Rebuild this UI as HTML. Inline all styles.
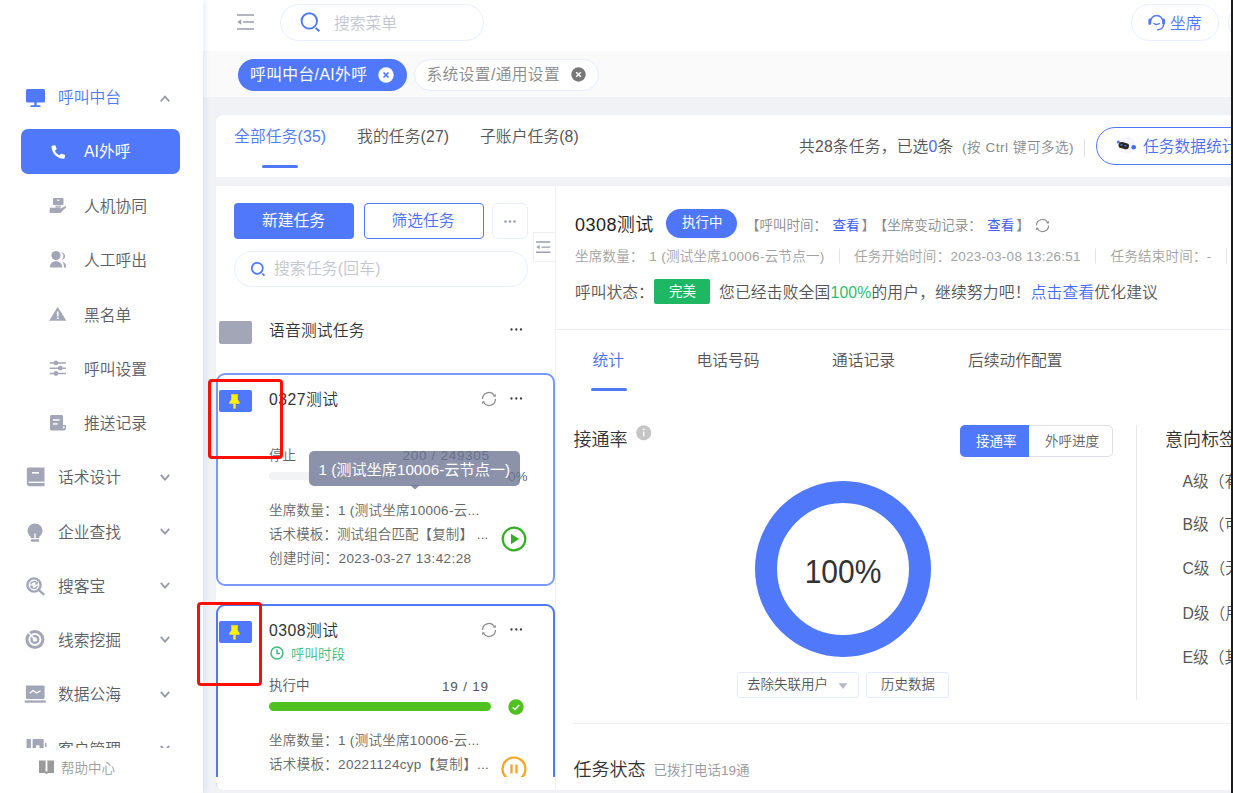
<!DOCTYPE html>
<html lang="zh-CN">
<head>
<meta charset="utf-8">
<title>AI外呼</title>
<style>
*{box-sizing:border-box;margin:0;padding:0}
html,body{width:1233px;height:793px;overflow:hidden;background:#f0f2f5}
body{position:relative;font-family:"Liberation Sans","Noto Sans CJK SC",sans-serif;font-size:15.75px;color:#333;font-weight:350;-webkit-font-smoothing:antialiased}
.abs{position:absolute}
.t{position:absolute;white-space:nowrap;line-height:1;transform:translateY(-50%)}
svg{position:absolute;overflow:visible}
/* sidebar */
#side{position:absolute;left:0;top:0;width:203px;height:793px;background:#fff;box-shadow:2px 0 5px rgba(80,120,250,.14);z-index:5}
#side .t{font-size:15.75px;color:#5c5e66;transform:translateY(-50%)}
#side .sub{left:84px}
#side .top{left:58px}
.chev{position:absolute;left:160px;width:10px;height:7px}
#foot{position:absolute;left:0;top:748px;width:203px;height:45px;background:#fff}
/* header */
#head{position:absolute;left:203px;top:0;width:1030px;height:51px;background:#fff}
#tabs{position:absolute;left:203px;top:51px;width:1030px;height:46px;background:#fafafa}
.pill{position:absolute;border-radius:20px}
/* panels */
#p1{position:absolute;left:216px;top:115px;width:1030px;height:62px;background:#fff;border-radius:8px 0 0 0}
#p2{position:absolute;left:216px;top:186px;width:1030px;height:604px;background:#fff;border-radius:0 0 0 8px;overflow:hidden}
#rightbar{position:absolute;left:1231px;top:0;width:2px;height:793px;background:#1c1c1c;z-index:20}
.red{position:absolute;border:3px solid #ff0e00;border-radius:4px;z-index:30}
</style>
</head>
<body>

<!-- ============ SIDEBAR ============ -->
<div id="side">
  <!-- 呼叫中台 -->
  <svg style="left:26px;top:88.600px" width="19" height="19" viewBox="0 0 19 19"><rect x="0" y="0" width="19" height="13.5" rx="1.5" fill="#5078fa"/><rect x="8.3" y="13" width="2.4" height="4" fill="#5078fa"/><rect x="4.5" y="16.3" width="10" height="1.8" rx=".6" fill="#5078fa"/></svg>
  <div class="t top" style="top:98.2px;color:#5078fa">呼叫中台</div>
  <svg class="chev" style="top:95px" viewBox="0 0 10 7"><path d="M.8 6.300 L5 1.500 L9.200 6.300" fill="none" stroke="#9699a7" stroke-width="1.800"/></svg>

  <div class="abs" style="left:21px;top:129px;width:159px;height:45px;background:#5078fa;border-radius:7px"></div>
  <svg style="left:50px;top:144.500px" width="16.500" height="15.500" viewBox="0 0 16 15"><path d="M2.2.6 4.6.2c.4 0 .7.2.8.5l1 2.9c.1.3 0 .6-.2.8L4.8 5.600c.9 2 2.400 3.500 4.400 4.400l1.200-1.400c.2-.2.500-.3.800-.2l2.900 1c.300.100.500.400.500.800l-.4 2.400c-.1.400-.4.600-.8.600C6.800 13.200 1.600 8 1.500 1.400c0-.4.300-.7.700-.8z" fill="#fff"/></svg>
  <div class="t sub" style="top:152.2px;color:#fff;font-weight:400">AI外呼</div>

  <div class="t sub" style="top:207.1px">人机协同</div>
  <div class="t sub" style="top:261.3px">人工呼出</div>
  <div class="t sub" style="top:315.6px">黑名单</div>
  <div class="t sub" style="top:369.8px">呼叫设置</div>
  <div class="t sub" style="top:424.0px">推送记录</div>

  <div class="t top" style="top:478.3px">话术设计</div>
  <div class="t top" style="top:532.6px">企业查找</div>
  <div class="t top" style="top:586.8px">搜客宝</div>
  <div class="t top" style="top:641.1px">线索挖掘</div>
  <div class="t top" style="top:695.3px">数据公海</div>
  <div class="t top" style="top:749.6px">客户管理</div>

  <svg class="chev" style="top:474px" viewBox="0 0 10 7"><path d="M.8 .8 L5 5.600 L9.200 .8" fill="none" stroke="#9699a7" stroke-width="1.800"/></svg>
  <svg class="chev" style="top:528px" viewBox="0 0 10 7"><path d="M.8 .8 L5 5.600 L9.200 .8" fill="none" stroke="#9699a7" stroke-width="1.800"/></svg>
  <svg class="chev" style="top:582px" viewBox="0 0 10 7"><path d="M.8 .8 L5 5.600 L9.200 .8" fill="none" stroke="#9699a7" stroke-width="1.800"/></svg>
  <svg class="chev" style="top:636px" viewBox="0 0 10 7"><path d="M.8 .8 L5 5.600 L9.200 .8" fill="none" stroke="#9699a7" stroke-width="1.800"/></svg>
  <svg class="chev" style="top:691px" viewBox="0 0 10 7"><path d="M.8 .8 L5 5.600 L9.200 .8" fill="none" stroke="#9699a7" stroke-width="1.800"/></svg>
  <svg class="chev" style="top:745px" viewBox="0 0 10 7"><path d="M.8 .8 L5 5.600 L9.200 .8" fill="none" stroke="#9699a7" stroke-width="1.800"/></svg>


  <!-- sub icons -->
  <svg style="left:49px;top:197px" width="18" height="17" viewBox="0 0 18 17"><g fill="#a3a6b6"><rect x="4" y="1" width="10.500" height="7" rx="1"/><rect x="6.500" y="8.500" width="5.500" height="2.300" fill="#b9bbc7"/><path d="M.7 10.800h8.800l2.300.7 4.600-2.400.9 1.100-6 5.700H.7z"/></g><rect x="8" y="2.700" width="2.500" height="1" fill="#fff"/></svg>
  <svg style="left:49px;top:250px" width="18" height="18" viewBox="0 0 18 18"><g fill="#a3a6b6"><circle cx="7" cy="5.600" r="4.600"/><path d="M.8 17.500c0-4 2.600-6.300 6.200-6.300s6.200 2.300 6.200 6.300z"/><path d="M12.300 2.300c2.600.5 3.800 2.500 3.800 4 0 1.600-1.100 3.200-3.400 3.500 1.400-1.200 1.700-2.600 1.700-3.800 0-1.300-.8-2.800-2.100-3.700zM13.600 11.800c2.300.8 3.600 2.800 3.600 5.700h-2.300c0-2.200-.3-4.200-1.300-5.700z"/></g></svg>
  <svg style="left:49px;top:306px" width="18" height="16" viewBox="0 0 18 16"><path d="M8.700.7 17.300 14.800H.2z" fill="#a3a6b6"/><rect x="7.900" y="5.400" width="1.700" height="5" fill="#fff"/><rect x="7.900" y="11.400" width="1.700" height="1.700" fill="#fff"/></svg>
  <svg style="left:49px;top:359px" width="18" height="18" viewBox="0 0 18 18"><g stroke="#a3a6b6" stroke-width="1.500"><path d="M.7 3.900h16.200M.7 9.200h16.200M.7 14.500h16.200"/></g><g fill="#a3a6b6"><circle cx="6.900" cy="3.900" r="2.400"/><circle cx="11.300" cy="9.200" r="2.400"/><circle cx="6.900" cy="14.500" r="2.400"/></g></svg>
  <svg style="left:50px;top:415px" width="17" height="16" viewBox="0 0 17 16"><path d="M1.500 0h10c.8 0 1.500.7 1.500 1.500V10h3v3.500c0 1.100-.9 2-2 2H1.500C.7 15.500 0 14.800 0 14V1.500C0 .7.700 0 1.500 0z" fill="#a3a6b6"/><rect x="3" y="4.200" width="6.500" height="1.500" fill="#fff"/><rect x="3" y="8.200" width="4.600" height="1.500" fill="#fff"/><rect x="13" y="11.300" width="1.600" height="2" fill="#fff"/></svg>
  <!-- top icons -->
  <svg style="left:26px;top:467px" width="19" height="20" viewBox="0 0 19 20"><path d="M2.500.6h16v18.600H3.500c-1.400 0-2.700-1.100-2.700-2.600V2.300C.8 1.400 1.600.6 2.500.6z" fill="#a3a6b6"/><rect x="6" y="5" width="7" height="1.600" fill="#fff"/><path d="M2.500 15.300h16" stroke="#fff" stroke-width="1.300"/></svg>
  <svg style="left:26px;top:522.500px" width="19" height="20" viewBox="0 0 19 20"><path d="M9 .5c4.100 0 7.500 3.200 7.500 7.300 0 2.500-1.400 4.500-3.100 5.800v1.300H4.600v-1.300C2.900 12.300 1.500 10.300 1.500 7.800 1.500 3.700 4.900.5 9 .5z" fill="#a3a6b6"/><rect x="4.800" y="16.200" width="8.400" height="2.500" rx=".8" fill="#a3a6b6"/><rect x="8.300" y="10.500" width="1.400" height="4.400" fill="#fff"/></svg>
  <svg style="left:25px;top:576px" width="21" height="20" viewBox="0 0 21 20"><circle cx="9" cy="9" r="6.600" fill="none" stroke="#a3a6b6" stroke-width="2.400"/><path d="M14 14.200l5.300 4.700" stroke="#a3a6b6" stroke-width="2.300"/><path d="M5.700 8.300A3.400 3.400 0 0 1 11.600 6.800M12.300 9.700A3.400 3.400 0 0 1 6.400 11.200" fill="none" stroke="#a3a6b6" stroke-width="1.500"/><path d="M12.700 5.200v3.300H9.400zM5.300 12.800V9.500h3.300z" fill="#a3a6b6"/></svg>
  <svg style="left:25px;top:628.500px" width="20" height="21" viewBox="0 0 20 21"><circle cx="9.900" cy="10.500" r="8" fill="none" stroke="#a3a6b6" stroke-width="3"/><circle cx="9.900" cy="10.500" r="3.400" fill="none" stroke="#a3a6b6" stroke-width="2.300"/><path d="M2.600 2.600l7.300 7.900" stroke="#fff" stroke-width="1.500"/></svg>
  <svg style="left:24px;top:685px" width="22" height="19" viewBox="0 0 22 19"><rect x="1.900" y=".5" width="18.700" height="13.400" rx=".8" fill="#a3a6b6"/><rect x=".7" y="15.400" width="21.100" height="2.300" fill="#a3a6b6"/><path d="M5.800 8.300l3.200-2.800 3.600 2.600 4-2.300" fill="none" stroke="#fff" stroke-width="1.300"/></svg>
  <svg style="left:26px;top:739px" width="21" height="18" viewBox="0 0 21 18"><rect x=".5" y="0" width="4.400" height="17" fill="#a3a6b6"/><rect x="6.600" y="0" width="11.100" height="17" rx="1" fill="#a3a6b6"/><circle cx="11.800" cy="7.800" r="1.900" fill="#fff"/><rect x="19" y="4" width="1.500" height="4" fill="#a3a6b6"/></svg>
  <div id="foot">
    <svg style="left:39px;top:12px" width="15" height="15" viewBox="0 0 15 15"><path d="M0 .5h6.600v12.500H0zM8.400.5H15v12.500H8.400zM6.600 11.500h1.800v3l-.9-.8-.9.800z" fill="#9a9a9a"/></svg>
    <div class="t" style="left:61px;top:21px;font-size:13.5px;color:#9b9b9b">帮助中心</div>
  </div>
</div>

<!-- ============ HEADER ============ -->
<div id="head">
  <svg style="left:34px;top:14px" width="18" height="16" viewBox="0 0 18 16"><path d="M0 1h17M6 8h11M0 15h17" stroke="#9a9eae" stroke-width="1.700" fill="none"/><path d="M4.200 5.200v5.600L.4 8z" fill="#9a9eae"/></svg>
  <div class="pill" style="left:77px;top:4px;width:204px;height:37px;border:1px solid #e9edff;background:#fff"></div>
  <svg style="left:98px;top:12px" width="20" height="20" viewBox="0 0 20 20"><circle cx="8.300" cy="8.900" r="7.700" fill="none" stroke="#5078fa" stroke-width="1.900"/><path d="M14.600 15.900l3.800 3.300" stroke="#5078fa" stroke-width="2" fill="none"/></svg>
  <div class="t" style="left:131px;top:23.5px;color:#c3c6cf">搜索菜单</div>
  <div class="pill" style="left:927.5px;top:4px;width:88px;height:37px;border:1px solid #e9edff;background:#fff"></div>
  <svg style="left:944.500px;top:13px" width="18" height="18" viewBox="0 0 18 18"><path d="M2.600 8.600a6.100 6.100 0 1 1 12.200 0" fill="none" stroke="#5078fa" stroke-width="1.500"/><rect x=".4" y="5.600" width="2.800" height="6.400" rx="1.400" fill="#5078fa"/><rect x="14.200" y="5.600" width="2.800" height="6.400" rx="1.400" fill="#5078fa"/><path d="M5.400 10.200c1.900 1.500 4.500 1.500 6.400 0" fill="none" stroke="#5078fa" stroke-width="1.300"/><path d="M15.600 11.500c-.3 3.200-3 5.200-6.600 5.400" fill="none" stroke="#5078fa" stroke-width="1.400"/></svg>
  <div class="t" style="left:967px;top:23.5px;font-size:15.75px;color:#5078fa">坐席</div>
  <div class="pill" style="left:1025px;top:4px;width:60px;height:37px;border:1px solid #e9edff;background:#fff"></div>
</div>
<div id="tabs">
  <div class="pill" style="left:35px;top:8px;width:169px;height:31.5px;background:#5078fa"></div>
  <div class="t" style="left:47px;top:24px;font-size:15.75px;color:#fff;font-weight:400;letter-spacing:.4px">呼叫中台/AI外呼</div>
  <svg style="left:175px;top:16px" width="16" height="16" viewBox="0 0 16 16"><circle cx="8" cy="8" r="7.700" fill="#fff"/><path d="M5.500 5.500l5 5M10.500 5.500l-5 5" stroke="#5078fa" stroke-width="1.700"/></svg>
  <div class="pill" style="left:210.500px;top:8px;width:185px;height:31.5px;background:#fff;border:1px solid #e9edff"></div>
  <div class="t" style="left:223.500px;top:24px;font-size:15.75px;color:#8a8a8a;letter-spacing:.35px">系统设置/通用设置</div>
  <svg style="left:368px;top:16px" width="15" height="15" viewBox="0 0 15 15"><circle cx="7.500" cy="7.500" r="7.200" fill="#777"/><path d="M5.200 5.200l4.600 4.600M9.800 5.200l-4.600 4.600" stroke="#fff" stroke-width="1.600"/></svg>
</div>

<div id="p1">
  <div class="t" style="left:18px;top:22px;color:#5078fa;letter-spacing:.15px">全部任务(35)</div>
  <div class="abs" style="left:46px;top:50px;width:36px;height:3px;background:#5078fa;border-radius:1.500px"></div>
  <div class="t" style="left:141px;top:22px;color:#555;letter-spacing:.15px">我的任务(27)</div>
  <div class="t" style="left:264px;top:22px;color:#555;letter-spacing:.1px">子账户任务(8)</div>
  <div class="t" style="left:583px;top:31.500px;color:#555;letter-spacing:.2px">共28条任务，已选<span style="color:#4a6cf7">0</span>条</div>
  <div class="t" style="left:746px;top:32.500px;font-size:13.5px;color:#888;letter-spacing:.55px">(按 Ctrl 键可多选)</div>
  <div class="abs" style="left:868px;top:24px;width:1px;height:18px;background:#dcdfe6"></div>
  <div class="pill" style="left:880px;top:12px;width:200px;height:38px;border:1px solid #5078fa;background:#fff"></div>
  <svg style="left:899px;top:18px" width="26" height="22" viewBox="0 0 26 22"><circle cx="12" cy="12" r="8.500" fill="#f5f5fb"/><circle cx="3.300" cy="9" r="1.600" fill="#4f78fb"/><rect x="3.500" y="9.500" width="10.600" height="6.200" rx="3" fill="#2b2b20" transform="rotate(14 8.800 12.600)"/><rect x="5.300" y="11.800" width="2.200" height="1.300" rx=".6" fill="#4f78fb" transform="rotate(14 8.800 12.600)"/><rect x="9.300" y="11.800" width="2.200" height="1.300" rx=".6" fill="#4f78fb" transform="rotate(14 8.800 12.600)"/><circle cx="18.700" cy="14.300" r="2.300" fill="#3f6af5"/></svg>
  <div class="t" style="left:927px;top:31.500px;color:#4a6cf7">任务数据统计</div>
</div>
<div id="p2">
  <!-- left list -->
  <div class="abs" style="left:18px;top:17px;width:120px;height:36px;background:#5078fa;border-radius:4px"></div>
  <div class="t" style="left:46px;top:35px;color:#fff;font-weight:400">新建任务</div>
  <div class="abs" style="left:147.500px;top:17px;width:120px;height:36px;background:#fff;border:1px solid #5078fa;border-radius:4px"></div>
  <div class="t" style="left:175.500px;top:35px;color:#4a6cf7">筛选任务</div>
  <div class="abs" style="left:276px;top:17px;width:36px;height:36px;background:#fff;border:1px solid #e9edff;border-radius:6px"></div>
  <svg style="left:288px;top:33.5px" width="12" height="3" viewBox="0 0 12 3"><g fill="#9a9eae"><circle cx="1.500" cy="1.500" r="1.300"/><circle cx="6" cy="1.500" r="1.300"/><circle cx="10.500" cy="1.500" r="1.300"/></g></svg>
  <div class="abs" style="left:317px;top:46px;width:22px;height:30px;background:#fff;border:1px solid #eff0f3;border-right:none"></div>
  <svg style="left:320px;top:55.100px" width="14.300" height="12.200" viewBox="0 0 13 11"><path d="M0 .8h13M5 5.500h8M0 10.200h13" stroke="#9a9eae" stroke-width="1.300" fill="none"/><path d="M3.300 3.500v4L.3 5.500z" fill="#9a9eae"/></svg>
  <div class="pill" style="left:18px;top:64.5px;width:294px;height:36.5px;border:1px solid #e9edff;background:#fff"></div>
  <svg style="left:35px;top:76px" width="15" height="15" viewBox="0 0 15 15"><circle cx="6.300" cy="6.300" r="5.500" fill="none" stroke="#5078fa" stroke-width="1.700"/><path d="M11.300 11.600l2.200 2.100" stroke="#5078fa" stroke-width="1.700" fill="none"/></svg>
  <div class="t" style="left:58px;top:83px;color:#c3c6cf;letter-spacing:.2px">搜索任务(回车)</div>

  <div class="abs" style="left:3px;top:135px;width:33px;height:23px;background:#a3a6b6;border-radius:2px"></div>
  <div class="t" style="left:53px;top:144.5px;color:#333;letter-spacing:.2px">语音测试任务</div>
  <svg style="left:293.700px;top:142.4px" width="13" height="3" viewBox="0 0 13 3"><g fill="#3a3a3a"><circle cx="1.500" cy="1.500" r="1.150"/><circle cx="6.300" cy="1.500" r="1.150"/><circle cx="11" cy="1.500" r="1.150"/></g></svg>

  <!-- card 1 -->
  <div class="abs" style="left:0;top:187px;width:339px;height:213px;border:2px solid #7b99fc;border-radius:9px"></div>
  <div class="abs" style="left:3px;top:204px;width:33px;height:22px;background:#5078fa;border-radius:2px"></div>
  <svg style="left:13px;top:208px" width="11" height="15" viewBox="0 0 11 15"><path d="M1.800.2h7.400l-.5 1.300v4l1.900 2.600v1.700H.4V8.100l1.900-2.600v-4z" fill="#fff100"/><rect x="4.300" y="9.600" width="2.400" height="5" fill="#fff100"/></svg>
  <div class="t" style="left:53px;top:213.500px;color:#333;letter-spacing:.5px">0327测试</div>
  <svg style="left:265px;top:205px" width="16" height="16" viewBox="0 0 16 16"><path d="M1.500 8A6.500 6.500 0 0 1 13.320 4.270M14.500 8A6.500 6.500 0 0 1 2.680 11.730" fill="none" stroke="#8c8c8c" stroke-width="1.250"/><path d="M14.600 6.100 15 2.900 11.700 5.200zM1.400 9.900 1 13.100 4.300 10.800z" fill="#8c8c8c"/></svg>
  <svg style="left:293.700px;top:211.4px" width="13" height="3" viewBox="0 0 13 3"><g fill="#3a3a3a"><circle cx="1.500" cy="1.500" r="1.150"/><circle cx="6.300" cy="1.500" r="1.150"/><circle cx="11" cy="1.500" r="1.150"/></g></svg>
  <div class="t" style="left:53px;top:270px;font-size:13.5px;color:#666">停止</div>
  <div class="t" style="left:186.500px;top:270px;font-size:13.5px;color:#5a5a5a;letter-spacing:.7px">200 / 249305</div>
  <div class="abs" style="left:53px;top:285.500px;width:222px;height:8px;background:#f2f3f5;border-radius:4px"></div>
  <div class="t" style="left:292px;top:291px;font-size:13.5px;color:#666">0%</div>
  <div class="t" style="left:53px;top:324.800px;font-size:13.5px;color:#666;letter-spacing:.3px">坐席数量：1 (测试坐席10006-云...</div>
  <div class="t" style="left:53px;top:348.500px;font-size:13.5px;color:#666;letter-spacing:.1px">话术模板：测试组合匹配【复制】 ...</div>
  <div class="t" style="left:53px;top:372.500px;font-size:13.5px;color:#666;letter-spacing:.4px">创建时间：2023-03-27 13:42:28</div>
  <svg style="left:285px;top:340px" width="26" height="26" viewBox="0 0 26 26"><circle cx="13" cy="13" r="11.300" fill="none" stroke="#35ae26" stroke-width="2.200"/><path d="M10 7.800v10.400l8-5.200z" fill="#35ae26"/></svg>
  <!-- tooltip -->
  <div class="abs" style="left:93px;top:265px;width:210.500px;height:34.500px;background:rgba(110,119,149,.8);border-radius:5px"></div>
  <svg style="left:193.500px;top:299.300px" width="10" height="5" viewBox="0 0 10 5"><path d="M0 0h10L5 4.600z" fill="rgba(110,119,149,.8)"/></svg>
  <div class="t" style="left:102.5px;top:284px;color:#fff;font-size:15.2px;font-weight:400">1 (测试坐席10006-云节点一)</div>

  <!-- card 2 -->
  <div class="abs" style="left:0;top:418px;width:339px;height:230px;border:2px solid #4f78fb;border-radius:9px"></div>
  <div class="abs" style="left:3px;top:434.500px;width:33px;height:22px;background:#5078fa;border-radius:2px"></div>
  <svg style="left:13px;top:438.500px" width="11" height="15" viewBox="0 0 11 15"><path d="M1.800.2h7.400l-.5 1.300v4l1.900 2.600v1.700H.4V8.100l1.900-2.600v-4z" fill="#fff100"/><rect x="4.300" y="9.600" width="2.400" height="5" fill="#fff100"/></svg>
  <div class="t" style="left:53px;top:444.500px;color:#333;letter-spacing:.5px">0308测试</div>
  <svg style="left:265px;top:436.300px" width="16" height="16" viewBox="0 0 16 16"><path d="M1.500 8A6.500 6.500 0 0 1 13.320 4.270M14.500 8A6.500 6.500 0 0 1 2.680 11.730" fill="none" stroke="#8c8c8c" stroke-width="1.250"/><path d="M14.600 6.100 15 2.900 11.700 5.200zM1.400 9.900 1 13.100 4.300 10.800z" fill="#8c8c8c"/></svg>
  <svg style="left:293.700px;top:442.4px" width="13" height="3" viewBox="0 0 13 3"><g fill="#3a3a3a"><circle cx="1.500" cy="1.500" r="1.150"/><circle cx="6.300" cy="1.500" r="1.150"/><circle cx="11" cy="1.500" r="1.150"/></g></svg>
  <svg style="left:54.400px;top:459.800px" width="14" height="14" viewBox="0 0 14 14"><circle cx="7" cy="7" r="6" fill="none" stroke="#3dbb7c" stroke-width="1.500"/><path d="M7 3.500V7.500h3" fill="none" stroke="#3dbb7c" stroke-width="1.500"/></svg>
  <div class="t" style="left:75px;top:468.800px;font-size:13.5px;color:#3dbb7c">呼叫时段</div>
  <div class="t" style="left:53px;top:500px;font-size:13.5px;color:#555">执行中</div>
  <div class="t" style="left:226px;top:500.500px;font-size:13.5px;color:#555;letter-spacing:.8px">19 / 19</div>
  <div class="abs" style="left:53px;top:515.500px;width:222px;height:9px;background:#4fc21f;border-radius:4.5px"></div>
  <svg style="left:292px;top:512.500px" width="16" height="16" viewBox="0 0 16 16"><circle cx="8" cy="8" r="7.700" fill="#4fc21f"/><path d="M4.700 8.200l2.300 2.300 4.200-4.500" fill="none" stroke="#fff" stroke-width="1.300"/></svg>
  <div class="t" style="left:53px;top:554.500px;font-size:13.5px;color:#666;letter-spacing:.3px">坐席数量：1 (测试坐席10006-云...</div>
  <div class="t" style="left:53px;top:579px;font-size:13.5px;color:#666;letter-spacing:.32px">话术模板：20221124cyp【复制】...</div>
  <svg style="left:284.500px;top:569.800px" width="26" height="26" viewBox="0 0 26 26"><circle cx="13" cy="13" r="11.500" fill="none" stroke="#fba324" stroke-width="2.200"/><path d="M10.500 8.500v9M15.500 8.500v9" stroke="#fba324" stroke-width="2.300"/></svg>
  <div class="abs" style="left:0;top:591px;width:341px;height:14px;background:#fff"></div>

  <!-- vertical divider -->
  <div class="abs" style="left:339px;top:0;width:1px;height:604px;background:#eff0f4"></div>

  <!-- right detail -->
  <div class="t" style="left:359px;top:38.500px;font-size:18px;color:#222;letter-spacing:.45px">0308测试</div>
  <div class="pill" style="left:450px;top:23px;width:71px;height:29px;background:#4f76f9"></div>
  <div class="t" style="left:466px;top:37px;font-size:13.5px;color:#fff;font-weight:400">执行中</div>
  <div class="t" style="left:530px;top:39.500px;font-size:13.5px;color:#8a8a8a">【呼叫时间：<b style="color:#4460f0;font-weight:400;margin:0 2px 0 5.5px">查看</b>】<span style="margin-left:5.5px">【坐席变动记录：</span><b style="color:#4460f0;font-weight:400;margin:0 2px 0 5.5px">查看</b>】</div>
  <svg style="left:819.300px;top:31.600px" width="15" height="15" viewBox="0 0 16 16"><path d="M1.500 8A6.500 6.500 0 0 1 13.320 4.270M14.500 8A6.500 6.500 0 0 1 2.680 11.730" fill="none" stroke="#8c8c8c" stroke-width="1.250"/><path d="M14.600 6.100 15 2.900 11.700 5.200zM1.400 9.900 1 13.100 4.300 10.800z" fill="#8c8c8c"/></svg>
  <div class="t" style="left:359px;top:69.800px;font-size:13.5px;color:#a2a2a2;letter-spacing:.27px">坐席数量：<span style="margin-left:5.500px">1 (测试坐席10006-云节点一)</span><i style="display:inline-block;width:1px;height:15px;background:#e3e6ec;vertical-align:-2.5px;margin:0 14px 0 14.500px"></i>任务开始时间：2023-03-08 13:26:51<i style="display:inline-block;width:1px;height:15px;background:#e3e6ec;vertical-align:-2.5px;margin:0 14px 0 14.500px"></i>任务结束时间：-<i style="display:inline-block;width:1px;height:15px;background:#e3e6ec;vertical-align:-2.5px;margin:0 14px 0 14.500px"></i></div>
  <div class="t" style="left:359px;top:107px;color:#555">呼叫状态：</div>
  <div class="abs" style="left:438px;top:93px;width:56px;height:25px;background:#1eb864;border-radius:2px"></div>
  <div class="t" style="left:453px;top:106px;font-size:13.5px;color:#fff;font-weight:400">完美</div>
  <div class="t" style="left:503px;top:107px;color:#555;letter-spacing:.17px">您已经击败全国<span style="color:#2dbd70">100%</span>的用户，继续努力吧！<span style="color:#4a6cf7">点击查看</span>优化建议</div>
  <div class="abs" style="left:340px;top:143px;width:700px;height:1px;background:#eceef3"></div>
  <div class="t" style="left:376.500px;top:174.500px;color:#4a6cf7">统计</div>
  <div class="abs" style="left:374.500px;top:202px;width:36px;height:3px;background:#5078fa;border-radius:1.500px"></div>
  <div class="t" style="left:480.500px;top:174.500px;color:#555">电话号码</div>
  <div class="t" style="left:616px;top:174.500px;color:#555">通话记录</div>
  <div class="t" style="left:752px;top:174.500px;color:#555">后续动作配置</div>

  <div class="t" style="left:357.500px;top:254px;font-size:18px;color:#333">接通率</div>
  <svg style="left:420px;top:239px" width="15.500" height="15.500" viewBox="0 0 15 15"><circle cx="7.500" cy="7.500" r="7.300" fill="#c5c5c5"/><rect x="6.800" y="6.300" width="1.400" height="4.700" fill="#fff"/><circle cx="7.500" cy="4.300" r=".9" fill="#fff"/></svg>
  <div class="abs" style="left:744px;top:239px;width:153px;height:31.500px;border:1px solid #dcdfe6;border-radius:5px;background:#fff"></div>
  <div class="abs" style="left:744px;top:239px;width:69px;height:31.500px;background:#5078fa;border-radius:5px 0 0 5px"></div>
  <div class="t" style="left:760px;top:255.500px;font-size:13.5px;color:#fff;font-weight:400">接通率</div>
  <div class="t" style="left:829px;top:255.500px;font-size:13.5px;color:#606266">外呼进度</div>
  <svg style="left:539px;top:295px" width="176" height="176" viewBox="0 0 176 176"><circle cx="88" cy="88" r="77" fill="none" stroke="#4f78fb" stroke-width="22"/></svg>
  <div class="t" style="left:627px;top:385.500px;font-size:30px;color:#333;font-weight:400;transform:translate(-50%,-50%) scale(1,1.12)">100%</div>
  <div class="abs" style="left:521px;top:485.500px;width:122px;height:26px;border:1px solid #e6eaff;border-radius:3px;background:#fff"></div>
  <div class="t" style="left:531px;top:499.400px;font-size:13.5px;color:#555">去除失联用户</div>
  <svg style="left:622px;top:496.600px" width="10" height="6" viewBox="0 0 10 6"><path d="M.5.300h9L5 5.700z" fill="#b4b8c2"/></svg>
  <div class="abs" style="left:650px;top:485.500px;width:83px;height:26px;border:1px solid #e6eaff;border-radius:3px;background:#fff"></div>
  <div class="t" style="left:665px;top:499.400px;font-size:13.5px;color:#555">历史数据</div>
  <div class="abs" style="left:920px;top:239px;width:1px;height:275px;background:#e6e8ee"></div>
  <div class="t" style="left:949px;top:254px;font-size:18px;color:#333">意向标签</div>
  <div class="t" style="left:966.500px;top:295.500px;color:#555">A级（有</div>
  <div class="t" style="left:966.500px;top:339px;color:#555">B级（可</div>
  <div class="t" style="left:966.500px;top:383px;color:#555">C级（无</div>
  <div class="t" style="left:966.500px;top:427.500px;color:#555">D级（用</div>
  <div class="t" style="left:966.500px;top:471.500px;color:#555">E级（其</div>
  <div class="abs" style="left:357px;top:537px;width:700px;height:1px;background:#eceef3"></div>
  <div class="t" style="left:357.500px;top:583.500px;font-size:18px;color:#333">任务状态</div>
  <div class="t" style="left:437.500px;top:585px;font-size:13.5px;color:#999">已拨打电话19通</div>
</div>

<div id="rightbar"></div>
<div class="red" style="left:208px;top:379px;width:75px;height:80px"></div>
<div class="red" style="left:197px;top:601.500px;width:64.500px;height:84px"></div>
</body>
</html>
